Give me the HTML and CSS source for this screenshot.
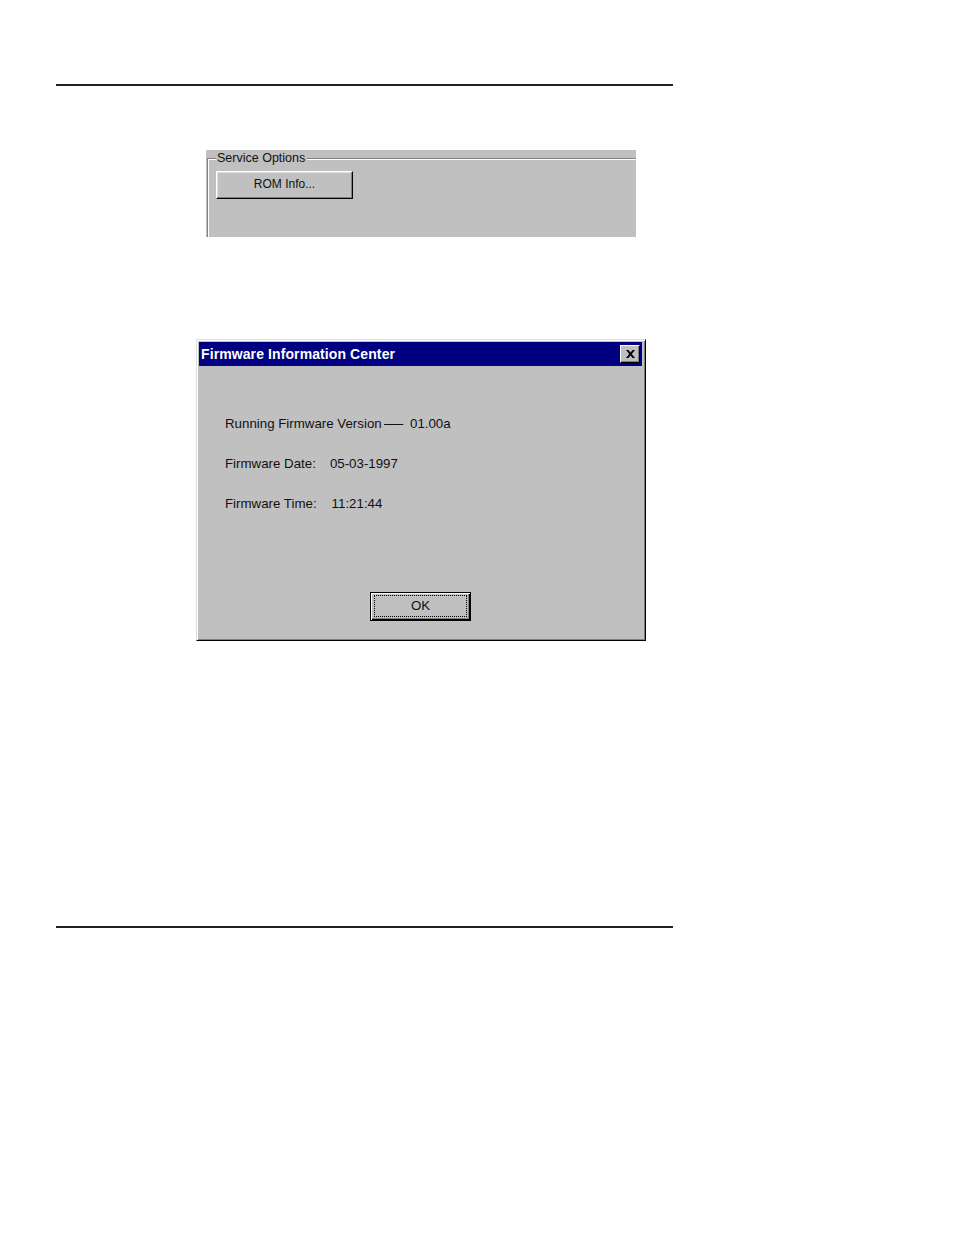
FILE: index.html
```html
<!DOCTYPE html>
<html>
<head>
<meta charset="utf-8">
<link rel="stylesheet" href="styles.css">
</head>
<body>
<div class="page">
  <div class="rule rule-top"></div>

  <div class="panel">
    <div class="groupbox">
      <span class="legend">Service Options</span>
      <div class="btn rom-btn">ROM Info...</div>
    </div>
  </div>

  <div class="dialog">
    <div class="titlebar">
      <span class="title">Firmware Information Center</span>
      <span class="close">
        <svg width="9" height="8" viewBox="0 0 9 8"><path d="M0 0h2.4l2.1 2.6L6.6 0H9L5.8 4 9 8H6.6L4.5 5.4 2.4 8H0l3.2-4z" fill="#000"/></svg>
      </span>
    </div>
    <div class="dlg-body">
      <div class="row">Running Firmware Version<span class="dash">—</span><span class="v1">01.00a</span></div>
      <div class="row">Firmware Date:<span class="v2">05-03-1997</span></div>
      <div class="row">Firmware Time:<span class="v3">11:21:44</span></div>
    </div>
    <div class="ok-wrap">
      <div class="ok-btn"><span class="focus">OK</span></div>
    </div>
  </div>

  <div class="rule rule-bottom"></div>
</div>
</body>
</html>
```

FILE: styles.css
```css
html, body {
  margin: 0;
  padding: 0;
  background: #fff;
}
.page {
  width: 954px;
  height: 1235px;
  padding-top: 84px;
  box-sizing: border-box;
  font-family: "Liberation Sans", Arial, sans-serif;
  color: #000;
}
.rule {
  margin-left: 56px;
  width: 617px;
  height: 2px;
  background: #231f20;
}
.panel {
  margin-top: 64px;
  margin-left: 206px;
  width: 430px;
  height: 87px;
  background: #c0c0c0;
  overflow: hidden;
  padding-top: 8px;
  padding-left: 1px;
  box-sizing: border-box;
}
.groupbox {
  position: relative;
  width: 460px;
  height: 120px;
  border-top: 1px solid #808080;
  border-left: 1px solid #808080;
  box-shadow: inset 1px 1px 0 #fff;
  padding-top: 12px;
  padding-left: 8px;
  box-sizing: border-box;
}
.legend {
  position: absolute;
  left: 8px;
  top: -9px;
  padding: 0 2px 0 1px;
  background: #c0c0c0;
  font-size: 12.5px;
  line-height: 16px;
  color: #111;
}
.btn {
  box-sizing: border-box;
  background: #c0c0c0;
  border-top: 1px solid #fff;
  border-left: 1px solid #fff;
  border-right: 1px solid #000;
  border-bottom: 1px solid #000;
  box-shadow: inset -1px -1px 0 #808080, inset 1px 1px 0 #dfdfdf;
  text-align: center;
  font-size: 12px;
  color: #111;
}
.rom-btn {
  width: 137px;
  height: 28px;
  line-height: 25px;
}
.dialog {
  margin-top: 102px;
  margin-left: 196px;
  width: 450px;
  height: 302px;
  box-sizing: border-box;
  background: #c0c0c0;
  border-top: 1px solid #dfdfdf;
  border-left: 1px solid #dfdfdf;
  border-right: 1px solid #000;
  border-bottom: 1px solid #000;
  box-shadow: inset 1px 1px 0 #fff, inset -1px -1px 0 #808080;
  padding: 2px 3px 0 2px;
  display: flex;
  flex-direction: column;
  margin-bottom: 285px;
}
.titlebar {
  height: 24px;
  background: #000080;
  display: flex;
  align-items: center;
  justify-content: space-between;
  padding: 0 2px 0 2px;
}
.title {
  color: #fff;
  font-weight: bold;
  font-size: 14px;
  line-height: 16px;
  letter-spacing: 0.1px;
}
.close {
  width: 20px;
  height: 18px;
  box-sizing: border-box;
  background: #c0c0c0;
  border-top: 1px solid #fff;
  border-left: 1px solid #fff;
  border-right: 1px solid #000;
  border-bottom: 1px solid #000;
  box-shadow: inset -1px -1px 0 #808080;
  display: flex;
  align-items: center;
  justify-content: center;
  padding-left: 1px;
}
.close svg {
  display: block;
}
.dlg-body {
  padding: 50px 0 0 26px;
  display: flex;
  flex-direction: column;
  gap: 24px;
  font-size: 13.3px;
  line-height: 16px;
  color: #111;
}
.row {
  white-space: nowrap;
}
.dash {
  display: inline-block;
  transform: scaleX(1.45);
  margin: 0 10px 0 5px;
}
.v2 { margin-left: 14px; }
.v3 { margin-left: 15px; }
.ok-wrap {
  margin-top: 80px;
  display: flex;
  justify-content: center;
}
.ok-btn {
  width: 101px;
  height: 29px;
  box-sizing: border-box;
  border: 1px solid #000;
  background: #c0c0c0;
  box-shadow: inset 1px 1px 0 #fff, inset -1px -1px 0 #000, inset -2px -2px 0 #808080;
  padding: 2px 3px 3px 3px;
  display: flex;
}
.focus {
  flex: 1;
  border: 1px dotted #000;
  text-align: center;
  font-size: 13.3px;
  line-height: 19px;
  color: #111;
}
```
